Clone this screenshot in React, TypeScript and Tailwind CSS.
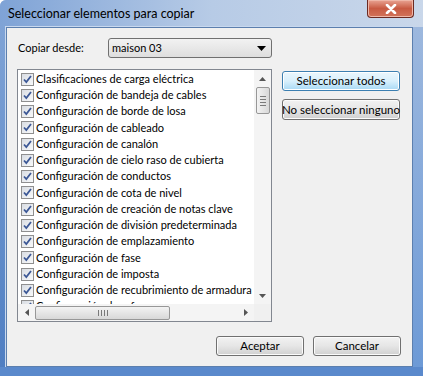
const items = [
  'Clasificaciones de carga eléctrica',
  'Configuración de bandeja de cables',
  'Configuración de borde de losa',
  'Configuración de cableado',
  'Configuración de canalón',
  'Configuración de cielo raso de cubierta',
  'Configuración de conductos',
  'Configuración de cota de nivel',
  'Configuración de creación de notas clave',
  'Configuración de división predeterminada',
  'Configuración de emplazamiento',
  'Configuración de fase',
  'Configuración de imposta',
  'Configuración de recubrimiento de armadura',
  'Configuración de refuerzo',
];

function CheckBox() {
  return (
    <span className="flex h-[13px] w-[13px] shrink-0 items-center justify-center border border-[#8f8f8f] bg-gradient-to-br from-[#d9dde3] to-[#f8f9fa]">
      <svg width="11" height="11" viewBox="0 0 11 11">
        <path d="M2 5.5 L4.3 8 L9 2" fill="none" stroke="#3c5896" strokeWidth="1.8" />
      </svg>
    </span>
  );
}

function Arrow({ dir }: { dir: 'up' | 'down' | 'left' | 'right' }) {
  const d = {
    up: 'M0 4 L3.5 0 L7 4 Z',
    down: 'M0 0 L7 0 L3.5 4 Z',
    left: 'M4 0 L4 7 L0 3.5 Z',
    right: 'M0 0 L0 7 L4 3.5 Z',
  }[dir];
  const vertical = dir === 'up' || dir === 'down';
  return (
    <svg width={vertical ? 7 : 4} height={vertical ? 4 : 7} viewBox={vertical ? '0 0 7 4' : '0 0 4 7'}>
      <path d={d} fill="#555" />
    </svg>
  );
}

function WinButton({ children, active, className }: { children: React.ReactNode; active?: boolean; className?: string }) {
  return (
    <div
      className={
        'flex items-center justify-center whitespace-nowrap rounded-[3px] border text-[11.5px] text-black ' +
        (active
          ? 'border-[#3c7fb1] bg-gradient-to-b from-[#eaf6fd] via-[#d9f0fc] to-[#a7d9f5] shadow-[inset_0_0_0_1px_#fff] '
          : 'border-[#707070] bg-gradient-to-b from-[#f2f2f2] via-[#e6e6e6] to-[#d0d0d0] shadow-[inset_0_0_0_1px_#fbfbfb] ') +
        (className ?? '')
      }
    >
      {children}
    </div>
  );
}

export default function App() {
  return (
    <div
      className="flex h-[376px] w-[423px] flex-col overflow-hidden rounded-tl-[6px] bg-gradient-to-b from-[#9db8de] via-[#6f9ad3] to-[#5584c7] text-black"
      style={{ fontFamily: 'Lato, "Noto Sans", sans-serif' }}
    >
      {/* title bar */}
      <div className="flex h-[27px] shrink-0 items-start bg-gradient-to-r from-[#7fa3d6] via-[#b7cbe6] to-[#c9d7ea]">
        <span className="mt-[6px] ml-[8px] text-[12.5px] leading-[16px] text-black">Seleccionar elementos para copiar</span>
        <div className="ml-auto mr-[9px] flex h-[18px] w-[47px] items-center justify-center rounded-b-[4px] border border-t-0 border-[#6b2a22] bg-gradient-to-b from-[#e8a493] via-[#c85a42] to-[#d2735a] shadow-[inset_0_0_0_1px_#efb7a8]">
          <svg width="12" height="10" viewBox="0 0 12 10">
            <path d="M2 1 L10 9 M10 1 L2 9" stroke="#ffffff" strokeWidth="2.6" strokeLinecap="round" />
          </svg>
        </div>
      </div>

      {/* middle */}
      <div className="flex h-[340px] shrink-0">
        <div className="w-[6px] shrink-0 bg-gradient-to-b from-[#7fa3d6] to-[#4f7ec2]" />
        <div className="flex h-[340px] w-[407px] shrink-0 flex-col border border-[#5c7fae] bg-[#f0f0f0] shadow-[0_0_0_1px_#c8d8ee]">
          <div className="mt-[10px] flex h-[20px] items-center">
            <span className="ml-[11px] w-[90px] text-[11px]">Copiar desde:</span>
            <div className="flex h-[20px] w-[164px] items-center rounded-[3px] border border-[#707070] bg-gradient-to-b from-[#f2f2f2] to-[#dedede] pl-[3px] pr-[5px] text-[11px]">
              <span>maison 03</span>
              <svg className="ml-auto" width="9" height="5" viewBox="0 0 9 5">
                <path d="M0 0 L9 0 L4.5 5 Z" fill="#000" />
              </svg>
            </div>
          </div>

          <div className="mt-[11px] flex">
            {/* list */}
            <div className="ml-[10px] flex h-[253px] w-[255px] flex-col border border-[#828790] bg-white">
              <div className="flex min-h-0 flex-1">
                <div className="flex-1 overflow-hidden pt-[1px]">
                  {items.map((t) => (
                    <div key={t} className="flex h-[16.25px] items-center gap-[2px] pl-[3px] text-[11px] whitespace-nowrap">
                      <CheckBox />
                      <span>{t}</span>
                    </div>
                  ))}
                </div>
                {/* vertical scrollbar */}
                <div className="flex w-[17px] shrink-0 flex-col items-center bg-[#f4f4f4]">
                  <div className="flex h-[17px] items-center justify-center">
                    <Arrow dir="up" />
                  </div>
                  <div className="flex h-[27px] w-[14px] flex-col items-center justify-center gap-[2px] rounded-[2px] border border-[#979797] bg-gradient-to-r from-[#f3f3f3] to-[#d8d8d8]">
                    <div className="h-px w-[6px] bg-[#7a7a7a]" />
                    <div className="h-px w-[6px] bg-[#7a7a7a]" />
                    <div className="h-px w-[6px] bg-[#7a7a7a]" />
                    <div className="h-px w-[6px] bg-[#7a7a7a]" />
                  </div>
                  <div className="mt-auto flex h-[17px] items-center justify-center">
                    <Arrow dir="down" />
                  </div>
                </div>
              </div>
              {/* horizontal scrollbar */}
              <div className="flex h-[17px] shrink-0">
                <div className="flex flex-1 items-center bg-[#f4f4f4]">
                  <div className="flex w-[17px] justify-center">
                    <Arrow dir="left" />
                  </div>
                  <div className="flex h-[14px] w-[135px] items-center justify-center gap-[2px] rounded-[2px] border border-[#979797] bg-gradient-to-b from-[#f3f3f3] to-[#d8d8d8]">
                    <div className="h-[6px] w-px bg-[#7a7a7a]" />
                    <div className="h-[6px] w-px bg-[#7a7a7a]" />
                    <div className="h-[6px] w-px bg-[#7a7a7a]" />
                    <div className="h-[6px] w-px bg-[#7a7a7a]" />
                  </div>
                  <div className="ml-auto flex w-[17px] justify-center">
                    <Arrow dir="right" />
                  </div>
                </div>
                <div className="w-[17px] bg-[#f0f0f0]" />
              </div>
            </div>

            {/* side buttons */}
            <div className="ml-[10px] mt-[2px] flex flex-col gap-[8px]">
              <WinButton active className="h-[20px] w-[118px]">
                Seleccionar todos
              </WinButton>
              <WinButton className="h-[21px] w-[118px]">No seleccionar ninguno</WinButton>
            </div>
          </div>

          <div className="mt-[14px] flex justify-end gap-[9px] pr-[11px]">
            <WinButton className="h-[20px] w-[88px]">Aceptar</WinButton>
            <WinButton className="h-[20px] w-[88px]">Cancelar</WinButton>
          </div>
        </div>
        <div className="flex-1 bg-gradient-to-b from-[#9db8de] to-[#6d9ad6]" />
      </div>

      {/* bottom frame */}
      <div className="flex-1 bg-[#5a89cc]" />
    </div>
  );
}
